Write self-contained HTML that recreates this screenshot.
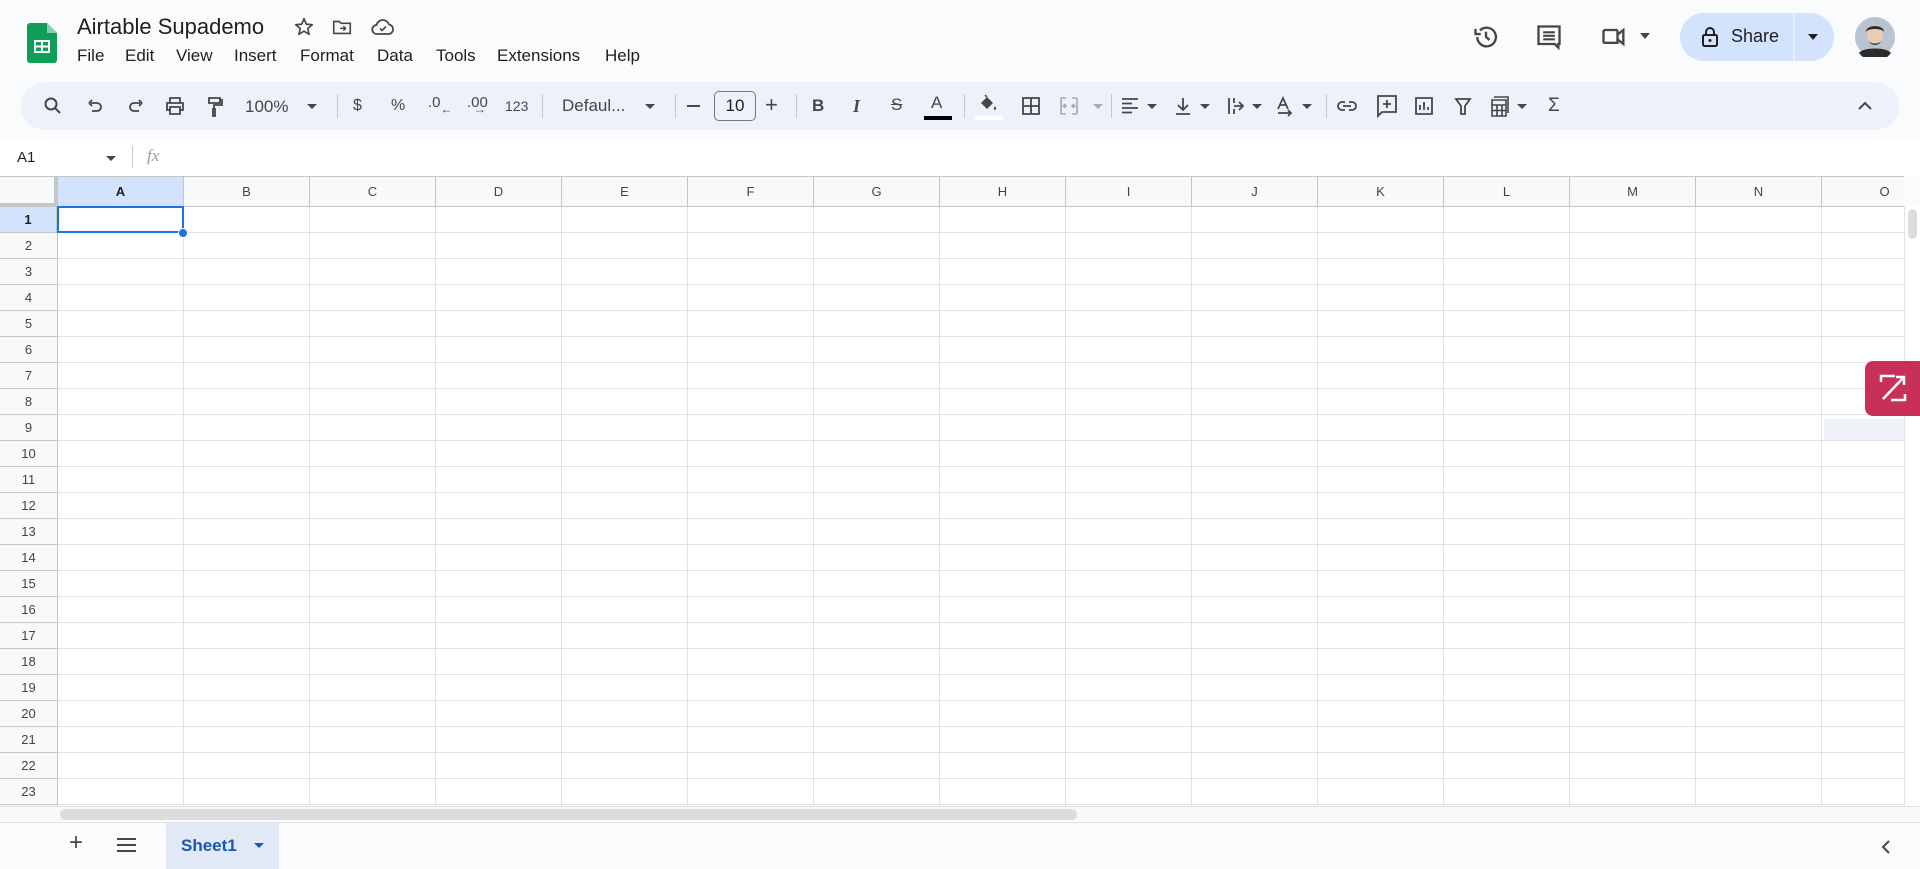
<!DOCTYPE html>
<html><head><meta charset="utf-8"><style>
*{margin:0;padding:0;box-sizing:border-box}
body{width:1920px;height:869px;overflow:hidden;background:#f9fbfd;font-family:"Liberation Sans",Arial,sans-serif;color:#1f1f1f;position:relative}
.a{position:absolute}
.menu span{position:absolute;top:46px;font-size:17px;color:#1f1f1f}
.tb{position:absolute;left:21px;top:82px;width:1878px;height:48px;background:#edf2fa;border-radius:24px}
.ic{position:absolute;top:96px}
.sep{position:absolute;top:94px;width:1px;height:24px;background:#c7c7c7}
.t{position:absolute;font-size:16px;color:#444746}
.grid{position:absolute;left:0;top:176px;width:1904px;height:630px;background:#fff;overflow:hidden}
.ch{position:absolute;top:0;height:30px;font-size:13px;color:#444;text-align:center;line-height:30px;border-right:1px solid #c4c7c5}
.rh{position:absolute;left:0;width:57px;font-size:13px;color:#444;text-align:center;border-bottom:1px solid #c4c7c5}
</style></head><body>
<svg class="a" style="left:27px;top:23px" width="30" height="40" viewBox="0 0 30 40"><path d="M3 0h17l10 10v27a3 3 0 0 1-3 3H3a3 3 0 0 1-3-3V3a3 3 0 0 1 3-3z" fill="#0f9d58"/><path d="M20 0l10 10H20z" fill="#87ceac"/><rect x="7" y="17" width="16" height="13" fill="#fff"/><path d="M9 19h5v3.5H9zM16 19h5v3.5h-5zM9 24.5h5V28H9zM16 24.5h5V28h-5z" fill="#0f9d58"/></svg>
<div class="a" style="left:77px;top:14px;font-size:22px;color:#1f1f1f">Airtable Supademo</div>
<svg class="a" style="left:293px;top:16px" width="22" height="22" viewBox="0 0 24 24"><path d="M12 3l2.6 6 6.4.5-4.9 4.2 1.5 6.3L12 16.6 6.4 20l1.5-6.3L3 9.5 9.4 9z" fill="none" stroke="#444746" stroke-width="1.8" stroke-linejoin="round"/></svg>
<svg class="a" style="left:331px;top:16px" width="22" height="22" viewBox="0 0 24 24"><path d="M3 6h6l2 2h10v11H3z" fill="none" stroke="#444746" stroke-width="1.8"/><path d="M10 13.5h6M13.5 11l2.5 2.5-2.5 2.5" fill="none" stroke="#444746" stroke-width="1.6"/></svg>
<svg class="a" style="left:371px;top:16px" width="24" height="22" viewBox="0 0 24 22"><path d="M6 18a4.5 4.5 0 0 1-.5-9A6.5 6.5 0 0 1 18 8.5 4.8 4.8 0 0 1 18 18z" fill="none" stroke="#444746" stroke-width="1.8"/><path d="M9 12.5l2 2 4-4" fill="none" stroke="#444746" stroke-width="1.6"/></svg>
<div class="menu"><span style="left:77px">File</span><span style="left:125px">Edit</span><span style="left:176px">View</span><span style="left:234px">Insert</span><span style="left:300px">Format</span><span style="left:377px">Data</span><span style="left:436px">Tools</span><span style="left:497px">Extensions</span><span style="left:605px">Help</span></div>
<svg class="a" style="left:1472px;top:23px" width="28" height="28" viewBox="0 0 24 24"><path d="M4.5 12a8 8 0 1 0 2.3-5.6" fill="none" stroke="#444746" stroke-width="2"/><path d="M3 5v4.5h4.5" fill="none" stroke="#444746" stroke-width="2"/><path d="M12 7.5V12l3 2.5" fill="none" stroke="#444746" stroke-width="2"/></svg>
<svg class="a" style="left:1535px;top:23px" width="28" height="28" viewBox="0 0 24 24"><path d="M3 3h18v15h-1v3l-3-3H3z" fill="none" stroke="#444746" stroke-width="2"/><path d="M7 8h10M7 11h10M7 14h10" stroke="#444746" stroke-width="1.8"/></svg>
<svg class="a" style="left:1600px;top:24px" width="28" height="26" viewBox="0 0 24 22"><path d="M4 5h10a2 2 0 0 1 1 1v10H4a1 1 0 0 1-1-1V6z" fill="none" stroke="#444746" stroke-width="2"/><path d="M15 9l5-4v12l-5-4" fill="none" stroke="#444746" stroke-width="2"/></svg>
<svg class="a" style="left:1640px;top:33px" width="10" height="6"><path d="M0 0h10L5 6z" fill="#444746"/></svg>
<div class="a" style="left:1680px;top:13px;width:154px;height:48px;border-radius:24px;background:#d3e3fd"></div>
<div class="a" style="left:1793px;top:13px;width:2px;height:48px;background:#f9fbfd;opacity:.5"></div>
<svg class="a" style="left:1701px;top:26px" width="18" height="22" viewBox="0 0 18 22"><rect x="2" y="9" width="14" height="11" rx="1.5" fill="none" stroke="#1f1f1f" stroke-width="2"/><path d="M5 9V6a4 4 0 0 1 8 0v3" fill="none" stroke="#1f1f1f" stroke-width="2"/><circle cx="9" cy="14.5" r="1.5" fill="#1f1f1f"/></svg>
<div class="a" style="left:1731px;top:26px;font-size:18px;color:#1f1f1f">Share</div>
<svg class="a" style="left:1808px;top:34px" width="10" height="6"><path d="M0 0h10L5 6z" fill="#1f1f1f"/></svg>
<svg class="a" style="left:1855px;top:17px" width="40" height="40" viewBox="0 0 40 40"><circle cx="20" cy="20" r="20" fill="#b8c4d0"/><ellipse cx="20" cy="18" rx="8" ry="10" fill="#e7cdb8"/><path d="M11 15c0-8 18-8 18 0-2-4-16-4-18 0z" fill="#2b2b2b"/><path d="M13 22c2 8 12 8 14 0-1 6-13 6-14 0z" fill="#3a3a3a"/><path d="M4 36c4-6 28-6 32 0a20 20 0 0 1-32 0z" fill="#2b2b2b"/></svg>
<div class="tb"></div>
<svg class="ic" style="left:43px" width="20" height="20" viewBox="0 0 20 20"><circle cx="8" cy="8" r="5.5" fill="none" stroke="#444746" stroke-width="2"/><path d="M12 12l5 5" stroke="#444746" stroke-width="2"/></svg>
<svg class="ic" style="left:85px" width="20" height="20" viewBox="0 0 20 20"><path d="M6 7h6a4 4 0 0 1 0 8H7M4 7l3-3M4 7l3 3" fill="none" stroke="#444746" stroke-width="1.8"/></svg>
<svg class="ic" style="left:126px" width="20" height="20" viewBox="0 0 20 20"><path d="M14 7H8a4 4 0 0 0 0 8h5M16 7l-3-3M16 7l-3 3" fill="none" stroke="#444746" stroke-width="1.8"/></svg>
<svg class="ic" style="left:165px" width="20" height="20" viewBox="0 0 20 20"><path d="M5 7V2h10v5M5 14H2V7h16v7h-3M5 11h10v7H5z" fill="none" stroke="#444746" stroke-width="1.8"/></svg>
<svg class="ic" style="left:205px" width="20" height="22" viewBox="0 0 20 22"><path d="M4 2h11v5H4zM15 4h2v5H9v4M8 13h2v7H8z" fill="none" stroke="#444746" stroke-width="1.8"/></svg>
<div class="t" style="left:245px;top:97px;font-size:17px">100%</div>
<svg class="a" style="left:307px;top:104px" width="10" height="5"><path d="M0 0h10L5 5z" fill="#444746"/></svg>
<div class="sep" style="left:337px"></div>
<div class="t" style="left:353px;top:97px">$</div>
<div class="t" style="left:391px;top:97px">%</div>
<div class="t" style="left:428px;top:94px;font-size:15px">.0<span style="font-size:12px;position:relative;top:6px">←</span></div>
<div class="t" style="left:467px;top:94px;font-size:15px">.00<span style="font-size:12px;position:relative;top:6px;margin-left:-14px">→</span></div>
<div class="t" style="left:505px;top:98px;font-size:14px">123</div>
<div class="sep" style="left:542px"></div>
<div class="t" style="left:562px;top:96px;font-size:17px">Defaul...</div>
<svg class="a" style="left:645px;top:104px" width="10" height="5"><path d="M0 0h10L5 5z" fill="#444746"/></svg>
<div class="sep" style="left:675px"></div>
<div class="a" style="left:687px;top:105px;width:13px;height:2px;background:#444746"></div>
<div class="a" style="left:714px;top:91px;width:42px;height:30px;border:1px solid #747775;border-radius:5px;font-size:17px;text-align:center;line-height:28px;color:#1f1f1f">10</div>
<div class="t" style="left:765px;top:92px;font-size:22px">+</div>
<div class="sep" style="left:796px"></div>
<div class="t" style="left:812px;top:96px;font-size:17px;font-weight:bold">B</div>
<div class="t" style="left:853px;top:96px;font-size:18px;font-style:italic;font-family:'Liberation Serif',serif;font-weight:bold">I</div>
<div class="t" style="left:891px;top:95px;font-size:17px;text-decoration:line-through">S</div>
<div class="t" style="left:931px;top:93px;font-size:17px">A</div>
<div class="a" style="left:924px;top:116px;width:28px;height:4px;background:#000"></div>
<div class="sep" style="left:964px"></div>
<svg class="ic" style="left:977px;top:94px" width="22" height="20" viewBox="0 0 22 20"><path d="M4 9l6-6 6 6-6 6z" fill="#444746"/><path d="M8 1l2 2" stroke="#444746" stroke-width="1.5"/><path d="M18 12c1 2 2 3 0 4-2-1-1-2 0-4z" fill="#444746"/></svg>
<div class="a" style="left:975px;top:116px;width:28px;height:4px;background:#fff"></div>
<svg class="ic" style="left:1021px" width="20" height="20" viewBox="0 0 20 20"><path d="M2 2h16v16H2zM10 2v16M2 10h16" fill="none" stroke="#444746" stroke-width="1.8"/></svg>
<svg class="ic" style="left:1059px" width="20" height="20" viewBox="0 0 20 20"><path d="M2 2h5M13 2h5M2 18h5M13 18h5M2 2v16M18 2v16M7 10H3M13 10h4M5 8l2 2-2 2M15 8l-2 2 2 2" fill="none" stroke="#aaa" stroke-width="1.6"/></svg>
<svg class="a" style="left:1093px;top:104px" width="10" height="5"><path d="M0 0h10L5 5z" fill="#aaa"/></svg>
<div class="sep" style="left:1111px"></div>
<svg class="ic" style="left:1120px" width="20" height="20" viewBox="0 0 20 20"><path d="M2 3h16M2 7.5h10M2 12h16M2 16.5h10" stroke="#444746" stroke-width="1.8"/></svg>
<svg class="a" style="left:1147px;top:104px" width="10" height="5"><path d="M0 0h10L5 5z" fill="#444746"/></svg>
<svg class="ic" style="left:1173px" width="20" height="20" viewBox="0 0 20 20"><path d="M10 2v12M5 9l5 5 5-5M3 18h14" fill="none" stroke="#444746" stroke-width="1.8"/></svg>
<svg class="a" style="left:1200px;top:104px" width="10" height="5"><path d="M0 0h10L5 5z" fill="#444746"/></svg>
<svg class="ic" style="left:1226px" width="20" height="20" viewBox="0 0 20 20"><path d="M3 2v16M8 10h9M13 6l4 4-4 4M8 2v5M8 13v5" fill="none" stroke="#444746" stroke-width="1.8"/></svg>
<svg class="a" style="left:1252px;top:104px" width="10" height="5"><path d="M0 0h10L5 5z" fill="#444746"/></svg>
<svg class="ic" style="left:1275px" width="20" height="22" viewBox="0 0 20 22"><path d="M3 13L8 2l5 11M5 9h6M3 17h12M13 14l3 3-3 3" fill="none" stroke="#444746" stroke-width="1.7"/></svg>
<svg class="a" style="left:1302px;top:104px" width="10" height="5"><path d="M0 0h10L5 5z" fill="#444746"/></svg>
<div class="sep" style="left:1326px"></div>
<svg class="ic" style="left:1336px" width="22" height="20" viewBox="0 0 22 20"><path d="M9 6H6a4 4 0 0 0 0 8h3M13 6h3a4 4 0 0 1 0 8h-3M7 10h8" fill="none" stroke="#444746" stroke-width="1.8"/></svg>
<svg class="ic" style="left:1376px;top:94px" width="22" height="24" viewBox="0 0 22 24"><path d="M2 2h18v16H6l-4 4z" fill="none" stroke="#444746" stroke-width="1.8"/><path d="M11 6v8M7 10h8" stroke="#444746" stroke-width="1.8"/></svg>
<svg class="ic" style="left:1414px" width="20" height="20" viewBox="0 0 20 20"><path d="M2 2h16v16H2z" fill="none" stroke="#444746" stroke-width="1.8"/><path d="M6 14V9M10 14V6M14 14v-3" stroke="#444746" stroke-width="1.8"/></svg>
<svg class="ic" style="left:1453px" width="20" height="20" viewBox="0 0 20 20"><path d="M3 3h14l-5 7v8h-4v-8z" fill="none" stroke="#444746" stroke-width="1.8"/></svg>
<svg class="ic" style="left:1490px" width="20" height="22" viewBox="0 0 20 22"><path d="M2 4h14v16H2zM2 9h14M7 9v11M12 9v11M2 14.5h14M4 1h14v16" fill="none" stroke="#444746" stroke-width="1.6"/></svg>
<svg class="a" style="left:1517px;top:104px" width="10" height="5"><path d="M0 0h10L5 5z" fill="#444746"/></svg>
<div class="t" style="left:1548px;top:95px;font-size:19px">Σ</div>
<svg class="a" style="left:1858px;top:101px" width="14" height="9"><path d="M1 8l6-6 6 6" fill="none" stroke="#444746" stroke-width="2"/></svg>
<div class="a" style="left:0;top:140px;width:1920px;height:36px;background:#fff"></div>
<div class="a" style="left:17px;top:149px;font-size:15px;color:#1f1f1f">A1</div>
<svg class="a" style="left:106px;top:156px" width="10" height="5"><path d="M0 0h10L5 5z" fill="#444746"/></svg>
<div class="a" style="left:132px;top:146px;width:1px;height:22px;background:#c7c7c7"></div>
<div class="a" style="left:147px;top:146px;font-size:17px;font-style:italic;font-family:'Liberation Serif',serif;color:#9aa0a6">fx</div>
<div class="grid">
<div class="a" style="left:0;top:0;width:1904px;height:1px;background:#c4c7c5"></div>
<div class="a" style="left:58px;top:31px;width:1846px;height:599px;background-image:linear-gradient(90deg,transparent 125px,#e1e1e1 125px,#e1e1e1 126px),linear-gradient(transparent 25px,#e1e1e1 25px,#e1e1e1 26px);background-size:126px 26px,126px 26px"></div>
<div class="a" style="left:0;top:1px;width:1904px;height:30px;background:#f8f9fa;border-bottom:1px solid #c4c7c5"></div>
<div class="a" style="left:0;top:31px;width:58px;height:599px;background:#f8f9fa;border-right:1px solid #c4c7c5"></div>
<div class="a" style="left:0;top:1px;width:58px;height:30px;background:#f8f9fa;border-right:4px solid #c4c7c5;border-bottom:4px solid #c4c7c5"></div>
<div class="ch" style="left:58px;width:126px;background:#d3e3fd;top:1px;color:#1f1f1f;font-weight:bold">A</div>
<div class="ch" style="left:184px;width:126px;top:1px">B</div><div class="ch" style="left:310px;width:126px;top:1px">C</div><div class="ch" style="left:436px;width:126px;top:1px">D</div><div class="ch" style="left:562px;width:126px;top:1px">E</div><div class="ch" style="left:688px;width:126px;top:1px">F</div><div class="ch" style="left:814px;width:126px;top:1px">G</div><div class="ch" style="left:940px;width:126px;top:1px">H</div><div class="ch" style="left:1066px;width:126px;top:1px">I</div><div class="ch" style="left:1192px;width:126px;top:1px">J</div><div class="ch" style="left:1318px;width:126px;top:1px">K</div><div class="ch" style="left:1444px;width:126px;top:1px">L</div><div class="ch" style="left:1570px;width:126px;top:1px">M</div><div class="ch" style="left:1696px;width:126px;top:1px">N</div><div class="ch" style="left:1822px;width:126px;top:1px">O</div>
<div class="rh" style="top:31px;height:26px;line-height:25px;background:#d3e3fd;font-weight:bold;color:#1f1f1f;border-right:1px solid #c4c7c5">1</div>
<div class="rh" style="top:57px;height:26px;line-height:25px">2</div><div class="rh" style="top:83px;height:26px;line-height:25px">3</div><div class="rh" style="top:109px;height:26px;line-height:25px">4</div><div class="rh" style="top:135px;height:26px;line-height:25px">5</div><div class="rh" style="top:161px;height:26px;line-height:25px">6</div><div class="rh" style="top:187px;height:26px;line-height:25px">7</div><div class="rh" style="top:213px;height:26px;line-height:25px">8</div><div class="rh" style="top:239px;height:26px;line-height:25px">9</div><div class="rh" style="top:265px;height:26px;line-height:25px">10</div><div class="rh" style="top:291px;height:26px;line-height:25px">11</div><div class="rh" style="top:317px;height:26px;line-height:25px">12</div><div class="rh" style="top:343px;height:26px;line-height:25px">13</div><div class="rh" style="top:369px;height:26px;line-height:25px">14</div><div class="rh" style="top:395px;height:26px;line-height:25px">15</div><div class="rh" style="top:421px;height:26px;line-height:25px">16</div><div class="rh" style="top:447px;height:26px;line-height:25px">17</div><div class="rh" style="top:473px;height:26px;line-height:25px">18</div><div class="rh" style="top:499px;height:26px;line-height:25px">19</div><div class="rh" style="top:525px;height:26px;line-height:25px">20</div><div class="rh" style="top:551px;height:26px;line-height:25px">21</div><div class="rh" style="top:577px;height:26px;line-height:25px">22</div><div class="rh" style="top:603px;height:26px;line-height:25px">23</div>
<div class="a" style="left:57px;top:30px;width:127px;height:27px;border:2px solid #1a73e8"></div>
<div class="a" style="left:178px;top:52px;width:10px;height:10px;border-radius:50%;background:#1a73e8;border:1px solid #fff"></div>
<div class="a" style="left:1824px;top:243px;width:80px;height:21px;background:#eef1f5"></div>
</div>
<div class="a" style="left:1904px;top:206px;width:16px;height:600px;background:#fff;border-left:1px solid #e1e1e1"></div>
<div class="a" style="left:1908px;top:209px;width:9px;height:30px;border-radius:5px;background:#dadce0"></div>
<div class="a" style="left:1865px;top:361px;width:55px;height:55px;background:#c8305a;border-radius:8px 0 0 8px"></div>
<svg class="a" style="left:1878px;top:373px" width="30" height="30" viewBox="0 0 30 30"><path d="M3 9V3h14M27 21v6H13M5 26L26 4M18 4h8v8" fill="none" stroke="#fff" stroke-width="2.5"/></svg>
<div class="a" style="left:0;top:806px;width:1920px;height:16px;background:#f8f9fa;border-top:1px solid #e1e1e1"></div>
<div class="a" style="left:60px;top:809px;width:1017px;height:11px;border-radius:6px;background:#dadce0"></div>
<div class="a" style="left:0;top:822px;width:1920px;height:47px;background:#f9fbfd;border-top:1px solid #e1e1e1"></div>
<div class="a" style="left:69px;top:829px;font-size:24px;color:#444746">+</div>
<svg class="a" style="left:117px;top:838px" width="19" height="14"><path d="M0 1h19M0 7h19M0 13h19" stroke="#444746" stroke-width="2"/></svg>
<div class="a" style="left:166px;top:823px;width:113px;height:46px;background:#e1e9f7"></div>
<div class="a" style="left:181px;top:836px;font-size:17px;font-weight:bold;color:#1a57b5">Sheet1</div>
<svg class="a" style="left:254px;top:843px" width="10" height="5"><path d="M0 0h10L5 5z" fill="#1a57b5"/></svg>
<svg class="a" style="left:1881px;top:840px" width="9" height="14"><path d="M8 1L2 7l6 6" fill="none" stroke="#444746" stroke-width="2"/></svg>
</body></html>
